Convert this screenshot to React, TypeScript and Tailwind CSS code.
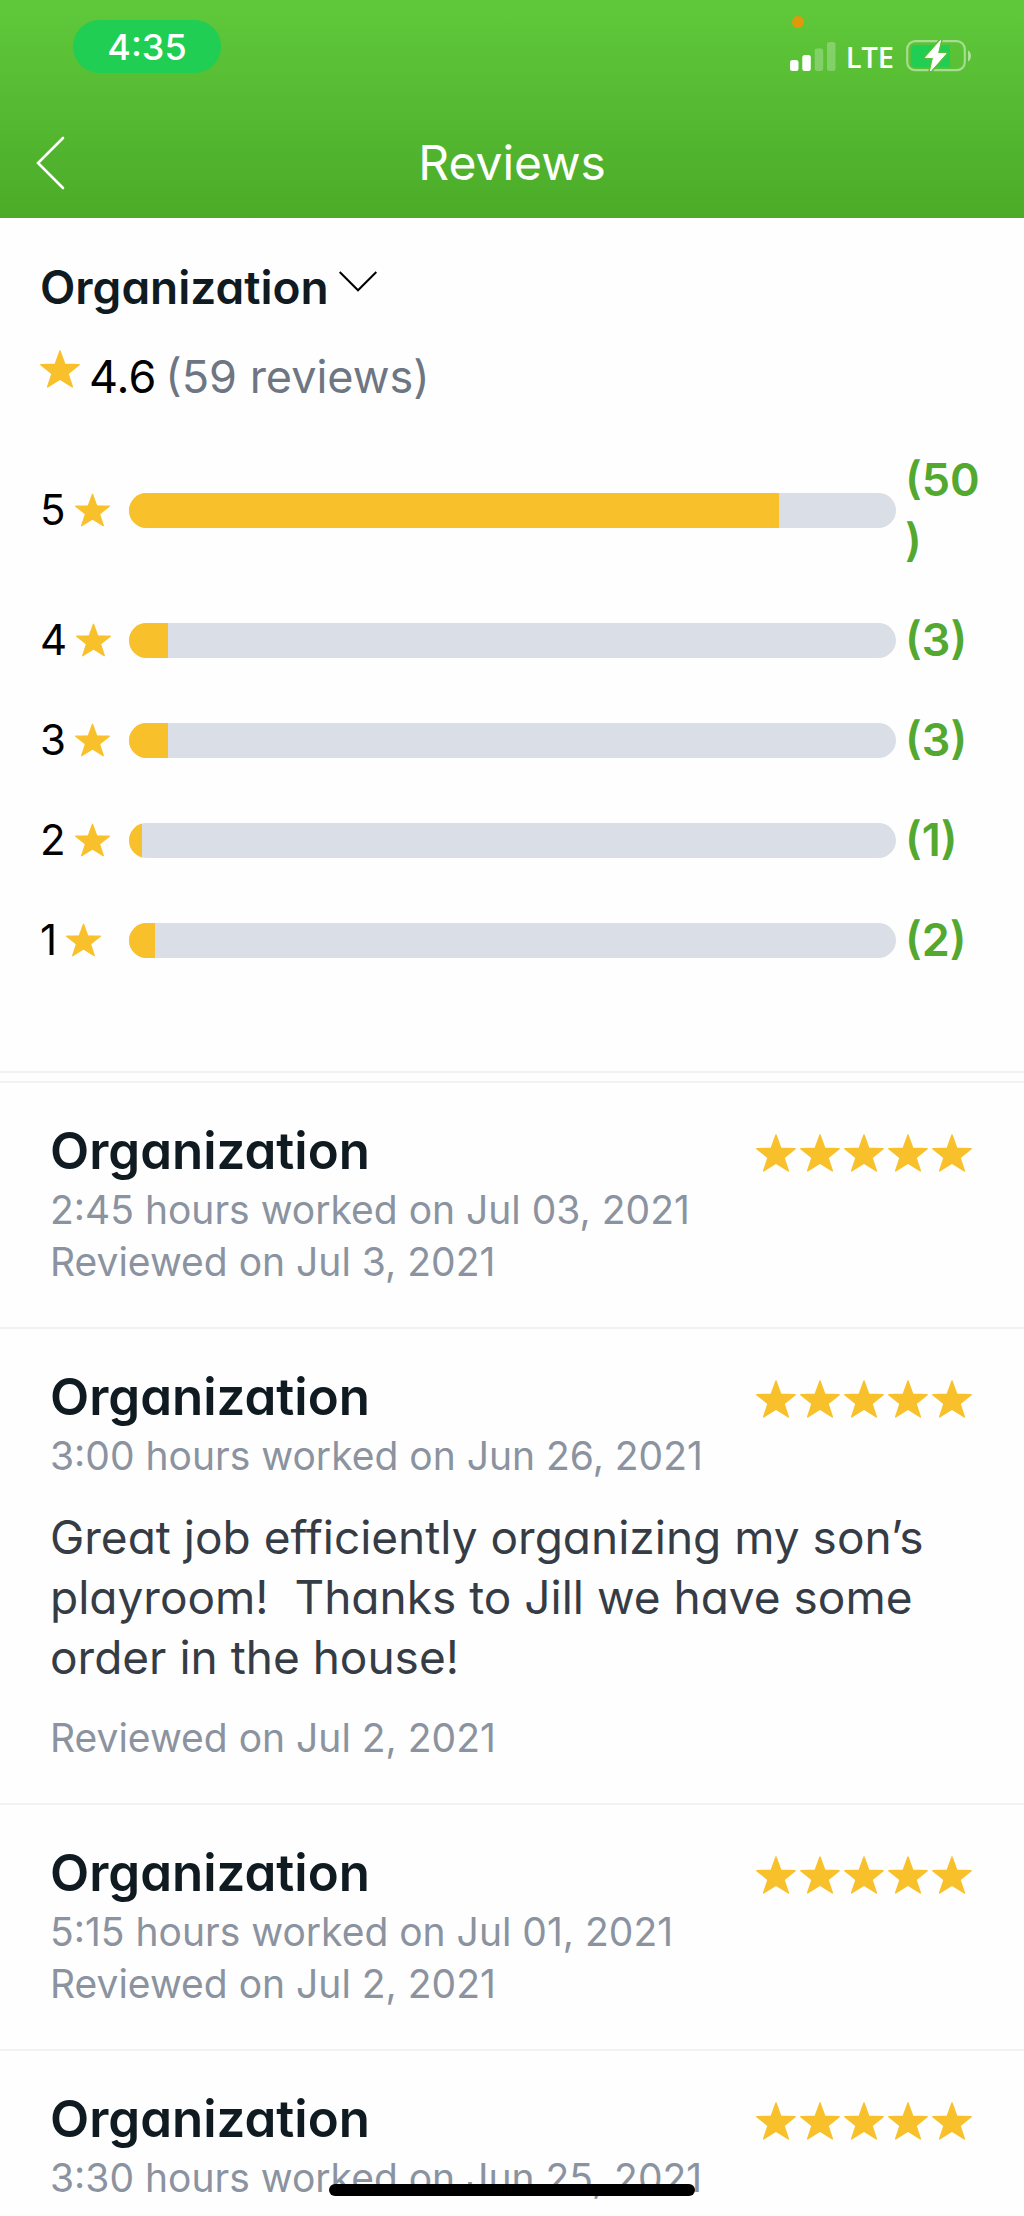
import { useState } from 'react';

type Review = {
  id: number;
  service: string;
  worked: string;
  stars: number;
  comment?: string;
  reviewed?: string;
};

const services = ['Organization'];

const ratings = [
  { stars: 5, count: 50 },
  { stars: 4, count: 3 },
  { stars: 3, count: 3 },
  { stars: 2, count: 1 },
  { stars: 1, count: 2 },
];

const reviews: Review[] = [
  {
    id: 1,
    service: 'Organization',
    worked: '2:45 hours worked on Jul 03, 2021',
    stars: 5,
    reviewed: 'Reviewed on Jul 3, 2021',
  },
  {
    id: 2,
    service: 'Organization',
    worked: '3:00 hours worked on Jun 26, 2021',
    stars: 5,
    comment: 'Great job efficiently organizing my son’s playroom!  Thanks to Jill we have some order in the house!',
    reviewed: 'Reviewed on Jul 2, 2021',
  },
  {
    id: 3,
    service: 'Organization',
    worked: '5:15 hours worked on Jul 01, 2021',
    stars: 5,
    reviewed: 'Reviewed on Jul 2, 2021',
  },
  {
    id: 4,
    service: 'Organization',
    worked: '3:30 hours worked on Jun 25, 2021',
    stars: 5,
  },
];

const total = ratings.reduce((sum, r) => sum + r.count, 0);

const Star = ({ className }: { className: string }) => (
  <svg viewBox="0 0 40 38" className={className} fill="#f8c12c" stroke="#f8c12c" strokeWidth="1.4" strokeLinejoin="round" aria-hidden="true">
    <path d="M20 1 L24.8 14.2 L39.2 14.6 L28 23.6 L32.4 37 L20 29.2 L7.6 37 L12 23.6 L0.8 14.6 L15.2 14.2 Z" />
  </svg>
);

const StatusBar = () => (
  <div className="flex h-[108px] items-start justify-between pt-5 pr-[52px] pl-[73px]">
    <div className="flex h-[53px] w-[148px] items-center justify-center rounded-full bg-[#1fce52] text-4xl font-medium">
      4:35
    </div>
    <div className="relative mt-5 flex h-8 items-center">
      <span className="absolute -top-6 left-[2px] h-3 w-3 rounded-full bg-[#de9a0a]" />
      <svg viewBox="0 0 46 30" className="h-[30px] w-[46px]" fill="#fff" aria-hidden="true">
        <rect x="0" y="19" width="8.5" height="11" rx="2.5" />
        <rect x="12.3" y="14" width="8.5" height="16" rx="2.5" />
        <rect x="24.7" y="7.5" width="8.5" height="22.5" rx="2.5" opacity="0.25" />
        <rect x="37" y="1" width="8.5" height="29" rx="2.5" opacity="0.25" />
      </svg>
      <span className="ml-[10px] pt-[2px] font-['Open_Sans',sans-serif] text-[29px] leading-8 font-semibold">LTE</span>
      <svg viewBox="0 0 66 32" className="ml-3 h-8 w-[66px]" aria-hidden="true">
        <rect x="1.2" y="1.2" width="57.6" height="29" rx="8" fill="none" stroke="#fff" strokeOpacity="0.45" strokeWidth="2.2" />
        <path d="M62 10.5 C66 12 66 20 62 21.5 Z" fill="#fff" fillOpacity="0.5" />
        <path d="M9 5 H44 V27 H9 Q5 27 5 23 V9 Q5 5 9 5 Z" fill="#1fce52" />
        <path d="M34.5 0.5 L19.5 17.5 H27.5 L24.5 31 L40 13.5 H31.5 Z" fill="#fff" stroke="#58c038" strokeWidth="4" strokeLinejoin="round" />
        <path d="M34.5 0.5 L19.5 17.5 H27.5 L24.5 31 L40 13.5 H31.5 Z" fill="#fff" stroke="#fff" strokeWidth="1" strokeLinejoin="round" />
      </svg>
    </div>
  </div>
);

const RatingRow = ({ stars, count }: { stars: number; count: number }) => (
  <li className="flex items-center">
    <div className="flex w-[89px] shrink-0 items-center gap-[9px] text-[42px] leading-[60px]">
      {stars}
      <Star className="h-[34px] w-[35px]" />
    </div>
    <div className="h-[35px] flex-1 overflow-hidden rounded-full bg-[#dadee6]">
      <div className="h-full bg-[#f8c12c]" style={{ width: `${(count / total) * 100}%` }} />
    </div>
    <span className="ml-[9px] w-[79px] shrink-0 text-[45px] leading-[60px] font-semibold wrap-anywhere text-[#53a82f]">
      ({count})
    </span>
  </li>
);

const ReviewCard = ({ review }: { review: Review }) => (
  <article className="border-t-2 border-[#f1f2f4] px-[50px] pt-[35px] pb-[39px]">
    <div className="flex items-center justify-between pr-[2px]">
      <h2 className="text-[51px] leading-[66px] font-semibold text-[#0f1a21]">{review.service}</h2>
      <div className="flex gap-1 pt-1">
        {Array.from({ length: review.stars }, (_, i) => (
          <Star key={i} className="h-[38px] w-10" />
        ))}
      </div>
    </div>
    <p className="text-[39px] leading-[52px] text-[#8b93a0]">{review.worked}</p>
    {review.comment ? (
      <p className="my-[25px] text-[46px] leading-[60px] whitespace-pre-wrap text-[#363c45]">{review.comment}</p>
    ) : null}
    {review.reviewed ? (
      <p className="text-[39px] leading-[52px] text-[#8b93a0]">{review.reviewed}</p>
    ) : null}
  </article>
);

export default function App() {
  const [service, setService] = useState(services[0]);

  return (
    <div className="h-screen overflow-hidden bg-[#fefefe] font-[Inter,sans-serif] text-black [font-feature-settings:'cv11']">
      <header className="bg-linear-to-b from-[#60c93b] to-[#4bab28] text-white">
        <StatusBar />
        <div className="grid h-[110px] grid-cols-[1fr_auto_1fr] items-center px-9">
          <button type="button" aria-label="Back" className="w-fit">
            <svg viewBox="0 0 30 54" className="h-[54px] w-[30px]" fill="none" stroke="#fff" strokeWidth="2.6" strokeLinecap="round" aria-hidden="true">
              <path d="M27 2 L2 27 L27 52" />
            </svg>
          </button>
          <h1 className="text-5xl">Reviews</h1>
        </div>
      </header>

      <section className="border-b-2 border-[#f1f2f4] px-10 pt-6 pb-[101px]">
        <div className="flex h-[90px] items-center">
          <select
            aria-label="Service"
            value={service}
            onChange={(e) => setService(e.target.value)}
            className="field-sizing-content appearance-none bg-transparent text-[46px] leading-[60px] font-semibold text-[#0f1a21]"
          >
            {services.map((s) => (
              <option key={s}>{s}</option>
            ))}
          </select>
          <svg viewBox="0 0 38 21" className="mb-3 ml-[10px] h-[21px] w-[38px]" fill="none" stroke="#000" strokeWidth="2" aria-hidden="true">
            <path d="M0.7 1 L19 19.3 L37.3 1" />
          </svg>
        </div>
        <div className="flex h-[90px] items-center text-[45px]">
          <Star className="mb-4 h-[38px] w-10" />
          <span className="ml-[9px]">4.6</span>
          <span className="ml-[9px] text-[#6d7682]">({total} reviews)</span>
        </div>
        <ul className="flex flex-col gap-10 pt-7">
          {ratings.map((r) => (
            <RatingRow key={r.stars} stars={r.stars} count={r.count} />
          ))}
        </ul>
      </section>

      <section className="mt-2">
        {reviews.map((review) => (
          <ReviewCard key={review.id} review={review} />
        ))}
      </section>

      {/* home indicator */}
      <div className="fixed bottom-5 left-1/2 h-3 w-[366px] -translate-x-1/2 rounded-full bg-black" />
    </div>
  );
}
